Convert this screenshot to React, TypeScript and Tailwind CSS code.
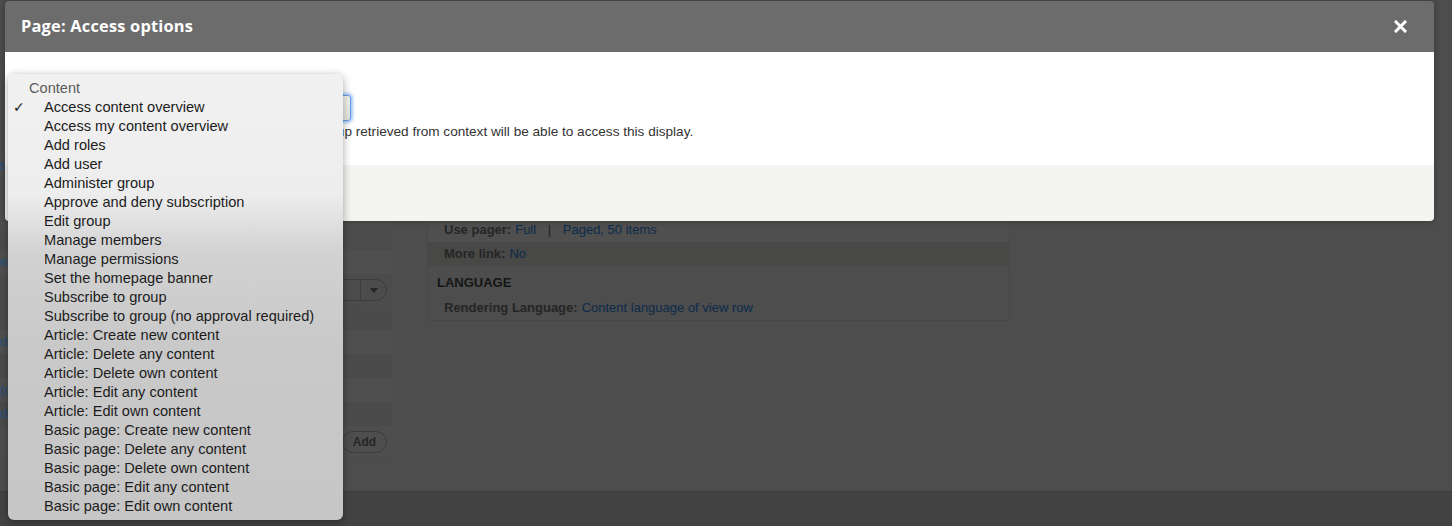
import React from 'react';

const permissions = [
  'Access content overview',
  'Access my content overview',
  'Add roles',
  'Add user',
  'Administer group',
  'Approve and deny subscription',
  'Edit group',
  'Manage members',
  'Manage permissions',
  'Set the homepage banner',
  'Subscribe to group',
  'Subscribe to group (no approval required)',
  'Article: Create new content',
  'Article: Delete any content',
  'Article: Delete own content',
  'Article: Edit any content',
  'Article: Edit own content',
  'Basic page: Create new content',
  'Basic page: Delete any content',
  'Basic page: Delete own content',
  'Basic page: Edit any content',
  'Basic page: Edit own content',
];

// rows of the dimmed views admin column behind the dialog
const leftRows = [
  { text: 'title', tone: 'bg-[#4f4f4f]' },
  { text: '', tone: 'bg-[#4c4c4c]' },
  { text: '', tone: 'bg-[#4f4f4f]' },
  { text: '', tone: 'bg-[#4c4c4c]' },
  { text: 'er: Published (= Yes)', tone: 'bg-[#4f4f4f]' },
];

const lowerRows = [
  { text: '', tone: 'bg-[#4b4b4b]' },
  { text: 'd', tone: 'bg-[#4f4f4f]' },
  { text: '', tone: 'bg-[#4b4b4b]' },
  { text: '(desc)', tone: 'bg-[#4f4f4f]' },
  { text: 'dr', tone: 'bg-[#4b4b4b]' },
];

const CloseIcon = () => (
  <svg width="13" height="13" viewBox="0 0 13 13">
    <path d="M2 2L11 11M11 2L2 11" stroke="#ffffff" strokeWidth="3" strokeLinecap="square" />
  </svg>
);

const PermissionMenu: React.FC = () => (
  <div
    className="absolute left-[8px] top-[74px] w-[335px] rounded-[6px] pt-[5px] pb-[4px] shadow-[0_2px_8px_rgba(0,0,0,0.35)] bg-[linear-gradient(180deg,#f1f1f1_0%,#ededed_27%,#d2d2d2_40%,#c9c9c9_60%,#c6c6c6_100%)] text-[14.6px] text-[#1c1c1c]"
    style={{ fontFamily: '"Liberation Sans", Arial, sans-serif' }}
  >
    <div className="h-[19px] leading-[19px] pl-[21px] text-[#5c5c5c]">Content</div>
    {permissions.map((p, i) => (
      <div key={p} className="relative h-[19px] leading-[19px] pl-[36px] whitespace-nowrap">
        {i === 0 && (
          <span
            className="absolute left-[5px] top-0 text-[14px] font-bold"
            style={{ fontFamily: '"DejaVu Sans", sans-serif' }}
          >
            ✓
          </span>
        )}
        {p}
      </div>
    ))}
  </div>
);

const Dialog: React.FC = () => (
  <div
    className="absolute left-[5px] top-[1px] w-[1429px] rounded-[4px] overflow-hidden shadow-[0_0_6px_rgba(0,0,0,0.3)]"
    style={{ fontFamily: '"Liberation Sans", Arial, sans-serif' }}
  >
    <div className="h-[51px] bg-[#6c6c6c] flex items-center justify-between pl-[16px] pr-[27px]">
      <h1
        className="text-white font-bold text-[16.4px] tracking-[0.2px]"
        style={{ fontFamily: '"Open Sans", sans-serif' }}
      >
        Page: Access options
      </h1>
      <CloseIcon />
    </div>
    <div className="h-[113px] bg-white px-[16px] pt-[22px]">
      <label className="block text-[13px] font-bold text-[#333] h-[20px]">Permission</label>
      <div className="mt-[1px] w-[330px] h-[26px] rounded-[3px] border border-[#5d9de6] shadow-[0_0_3px_2px_rgba(110,165,235,0.6)] bg-[linear-gradient(180deg,#f4f4ef,#e6e6df)] flex items-center px-[8px] text-[13px] text-[#333]">
        Access content overview
      </div>
      <p className="mt-[3px] text-[13.6px] leading-[16px] text-[#333]">
        Only users having the selected permission in the group retrieved from context will be able to access this display.
      </p>
    </div>
    <div className="h-[56px] bg-[#f4f4f0] px-[16px] flex items-center gap-[8px]">
      <button className="h-[28px] px-[16px] rounded-full bg-[#0071b8] text-white text-[13px] font-bold">Apply</button>
      <button className="h-[28px] px-[16px] rounded-full border border-[#a6a6a6] bg-[#f2f1eb] text-[#333] text-[13px] font-bold">Cancel</button>
      <button className="h-[28px] px-[16px] rounded-full border border-[#a6a6a6] bg-[#f2f1eb] text-[#333] text-[13px] font-bold">Remove</button>
    </div>
  </div>
);

const InfoRow: React.FC<{ label: string; tone: string; children: React.ReactNode }> = ({ label, tone, children }) => (
  <div className={`h-[24px] flex items-center pl-[16px] ${tone}`}>
    <span className="font-bold text-[#252525]">{label}</span>
    <span className="ml-[4px] text-[#0c2b4b]">{children}</span>
  </div>
);

const App: React.FC = () => {
  return (
    <div
      className="relative w-[1452px] h-[526px] overflow-hidden bg-[#4d4d4d] flex flex-col"
      style={{ fontFamily: '"Liberation Sans", Arial, sans-serif' }}
    >
      <div className="flex-1 flex pt-[154px]">
        <div className="w-[392px] flex flex-col text-[13px] self-start border-b border-[#484848]">
          {leftRows.map((r, i) => (
            <div key={i} className={`h-[24px] flex items-center whitespace-nowrap text-[#23507e] ${r.tone}`}>
              {r.text}
            </div>
          ))}
          <div className="h-[32px] flex items-center justify-end pr-[5px] bg-[#4c4c4c]">
            <div className="h-[22px] w-[58px] rounded-full border border-[#3c3c3c] flex overflow-hidden">
              <div className="w-[31px] border-r border-[#3c3c3c]" />
              <div className="flex-1 flex items-center justify-center">
                <svg width="8" height="5" viewBox="0 0 8 5">
                  <path d="M0 0H8L4 5Z" fill="#262626" />
                </svg>
              </div>
            </div>
          </div>
          {lowerRows.map((r, i) => (
            <div key={i} className={`h-[24px] flex items-center whitespace-nowrap text-[#23507e] ${r.tone}`}>
              {r.text}
            </div>
          ))}
          <div className="h-[31px] flex items-center justify-end pr-[5px] bg-[#4e4e4e]">
            <div className="h-[22px] w-[45px] rounded-full border border-[#3c3c3c] flex items-center justify-center text-[12px] font-bold text-[#262626]">
              Add
            </div>
          </div>
        </div>

        <div className="ml-[35px] mt-[15px] w-[583px] self-start border border-[#484848] text-[13px] bg-[#4d4d4d]">
          <InfoRow label="Items to display:" tone="bg-[#4f4f4f]">50</InfoRow>
          <InfoRow label="Offset:" tone="bg-[#4c4c4c]">0</InfoRow>
          <InfoRow label="Use pager:" tone="bg-[#4f4f4f]">
            Full <span className="mx-[8px] text-[#232323]">|</span> Paged, 50 items
          </InfoRow>
          <InfoRow label="More link:" tone="bg-[#484846]">No</InfoRow>
          <div className="h-[30px] flex items-center pt-[4px] pl-[9px] font-bold text-[#151515] text-[13px]">LANGUAGE</div>
          <InfoRow label="Rendering Language:" tone="bg-[#4d4d4d]">Content language of view row</InfoRow>
        </div>
      </div>

      <div className="h-[35px] bg-[#434343] border-t border-[#3e3e3e]" />

      <Dialog />
      <PermissionMenu />
    </div>
  );
};

export default App;
